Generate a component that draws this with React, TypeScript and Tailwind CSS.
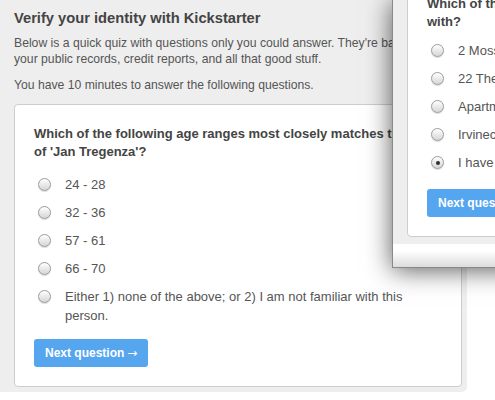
import { ReactNode } from "react";

interface Choice {
  label: string;
  checked?: boolean;
}

const ageChoices: Choice[] = [
  { label: "24 - 28" },
  { label: "32 - 36" },
  { label: "57 - 61" },
  { label: "66 - 70" },
  { label: "Either 1) none of the above; or 2) I am not familiar with this person." },
];

const addressChoices: Choice[] = [
  { label: "2 Moss Lane, Saltash" },
  { label: "22 The Crescent, Plymouth" },
  { label: "Apartment 4, 18 Marine Parade" },
  { label: "Irvinecroft Road, Truro" },
  { label: "I have never been associated with any of these addresses", checked: true },
];

function Radio({ checked }: { checked?: boolean }) {
  return (
    <span className="mt-[3px] flex h-[13px] w-[13px] shrink-0 items-center justify-center rounded-full border border-[#9c9c9c] bg-linear-to-b from-[#ffffff] to-[#d6d6d6] shadow-[0_1px_1px_rgba(0,0,0,0.15)]">
      {checked && <span className="h-[4px] w-[4px] rounded-full bg-[#2f2f2f]" />}
    </span>
  );
}

function QuizCard({
  question,
  choices,
  compact,
}: {
  question: ReactNode;
  choices: Choice[];
  compact?: boolean;
}) {
  return (
    <div className="rounded-[4px] border border-[#cdcdcd] bg-white px-[19px] pt-[20px] pb-[19px]">
      <h2 className="text-[13px] leading-[18px] font-bold text-[#444]">{question}</h2>
      <ul className={compact ? "mt-[10px] flex flex-col gap-[9px]" : "mt-[14px] flex flex-col gap-[9px]"}>
        {choices.map((choice) => (
          <li key={choice.label} className="flex gap-[14px] pl-[4px]">
            <Radio checked={choice.checked} />
            <span className="text-[13px] leading-[19px] text-[#555]">{choice.label}</span>
          </li>
        ))}
      </ul>
      <button
        type="button"
        className={
          compact
            ? "mt-[17px] flex h-[28px] items-center gap-[3px] rounded-[3px] bg-[#55a5ef] px-[11px] text-[12px] font-bold whitespace-nowrap text-white"
            : "mt-[14px] flex h-[28px] items-center gap-[3px] rounded-[3px] bg-[#55a5ef] px-[11px] text-[12px] font-bold whitespace-nowrap text-white"
        }
      >
        Next question
        <span className="font-['DejaVu_Sans',sans-serif] font-normal">→</span>
      </button>
    </div>
  );
}

export default function App() {
  return (
    <div className="relative h-[400px] w-[495px] overflow-hidden bg-white font-['Liberation_Sans',Arial,sans-serif]">
      <div className="h-[392px] w-[467px] rounded-br-[5px] bg-[#eeeeee] pt-[8px] pr-[5px] pl-[14px]">
        <h1 className="text-[14.7px] leading-[20px] font-bold text-[#444]">
          Verify your identity with Kickstarter
        </h1>
        <p className="mt-[7px] text-[12.2px] leading-[16px] text-[#555]">
          Below is a quick quiz with questions only you could answer. They're based on
          <br />
          your public records, credit reports, and all that good stuff.
        </p>
        <p className="mt-[10px] text-[12.2px] leading-[16px] text-[#555]">
          You have 10 minutes to answer the following questions.
        </p>
        <div className="mt-[11px]">
          <QuizCard
            question={
              <>
                Which of the following age ranges most closely matches the age
                <br />
                of 'Jan Tregenza'?
              </>
            }
            choices={ageChoices}
          />
        </div>
      </div>

      {/* second window, stacked over the first */}
      <div className="absolute top-0 left-[392px] flex h-[268px] w-[480px] flex-col justify-end overflow-hidden border-b border-l border-[#888] bg-[#eeeeee] shadow-[0_2px_24px_rgba(0,0,0,0.65)]">
        <div className="shrink-0 pr-[5px] pb-[7px] pl-[14px]">
          <QuizCard
            question={
              <>
                Which of the following addresses have you been associated
                <br />
                with?
              </>
            }
            choices={addressChoices}
            compact
          />
        </div>
        <div className="h-[23px] shrink-0 bg-linear-to-b from-white from-30% to-[#dcdcdc]" />
      </div>
    </div>
  );
}
